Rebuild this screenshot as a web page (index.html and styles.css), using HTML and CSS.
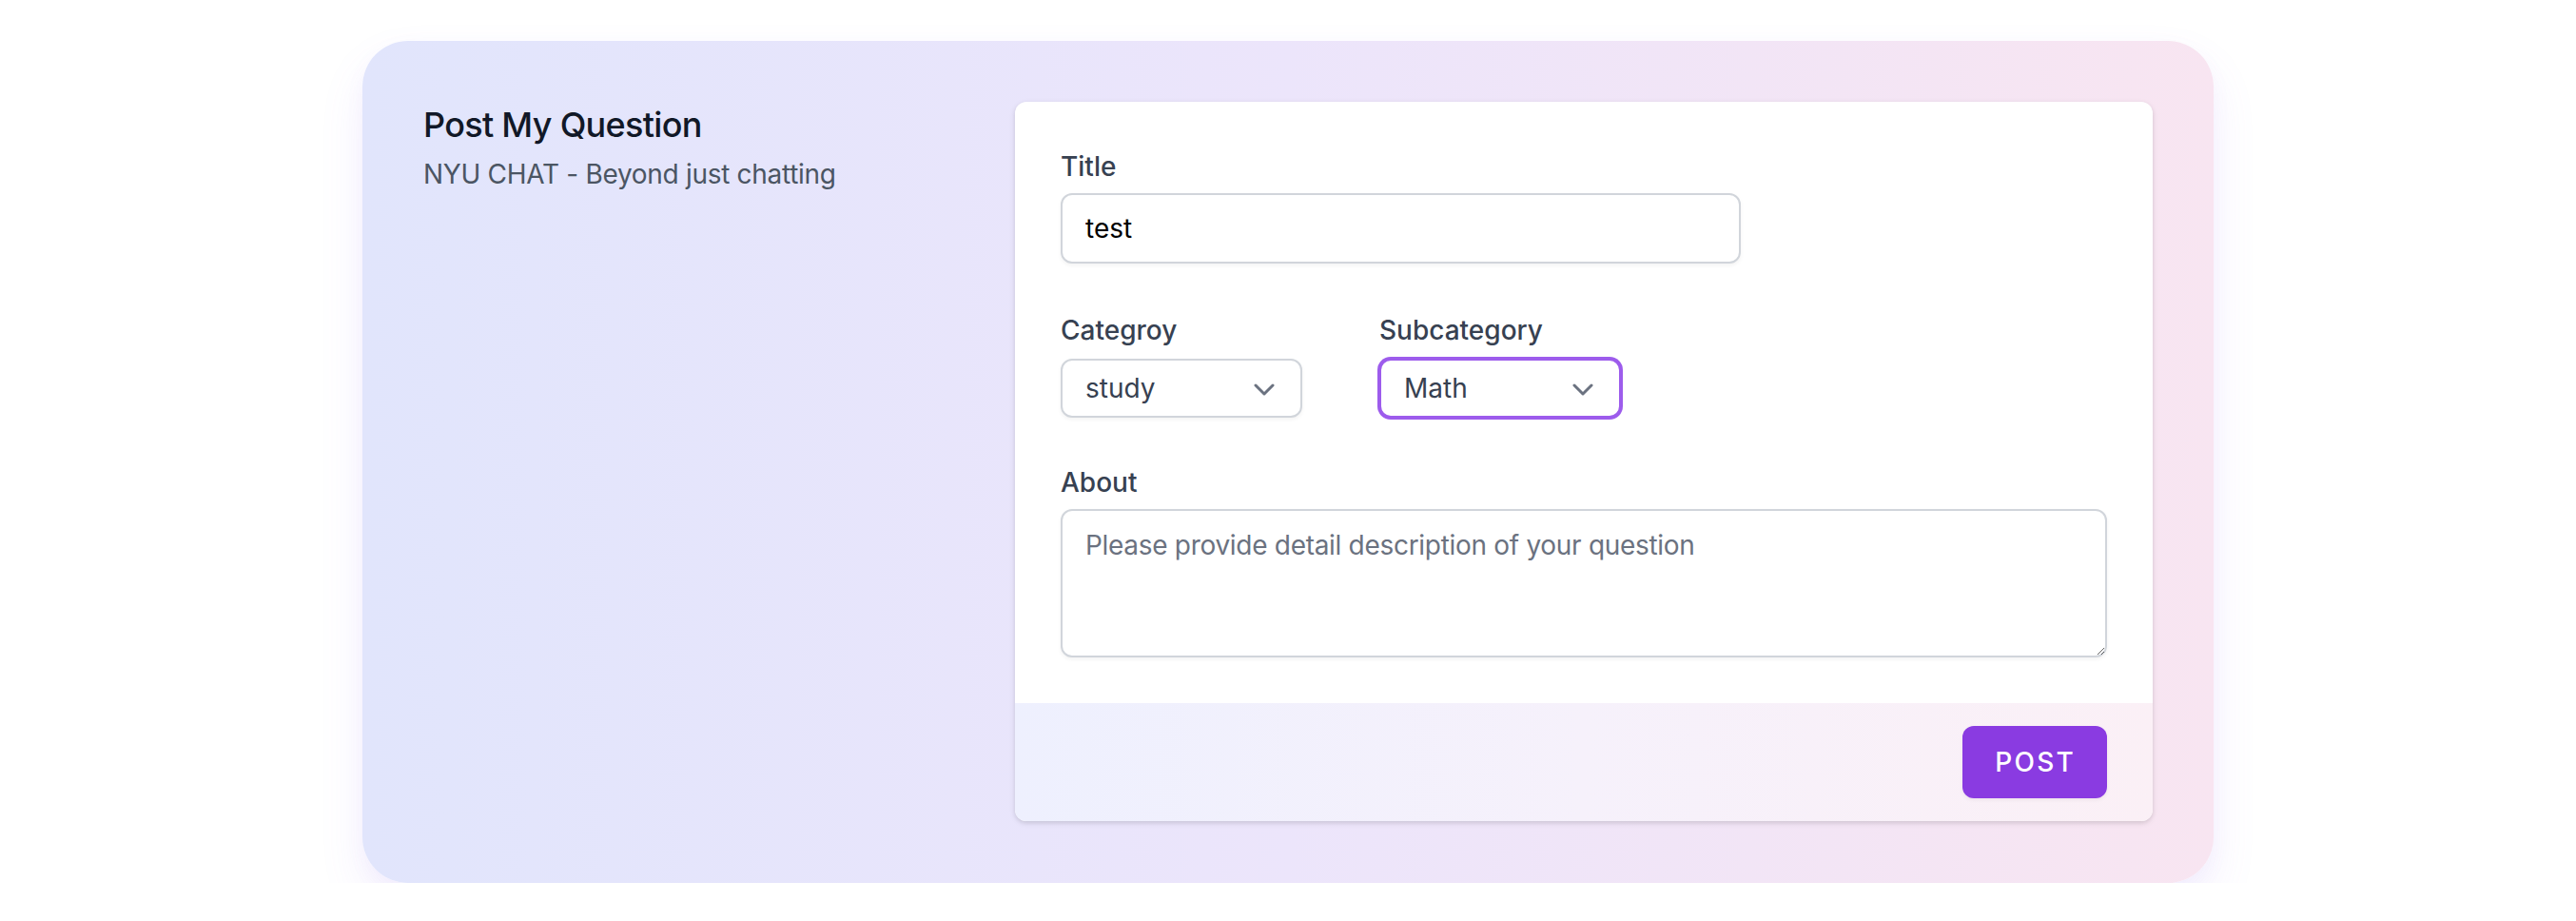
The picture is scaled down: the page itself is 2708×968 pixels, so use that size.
FILE: index.html
```html
<!DOCTYPE html>
<html lang="en">
<head>
<meta charset="utf-8">
<title>Post My Question</title>
<link rel="stylesheet" href="styles.css">
</head>
<body>
<div class="panel">
  <div class="intro">
    <h3 class="intro-title">Post My Question</h3>
    <p class="intro-sub">NYU CHAT - Beyond just chatting</p>
  </div>
  <form class="card">
    <div class="card-body">
      <div class="field">
        <label class="label">Title</label>
        <input class="text-input" type="text" value="test">
      </div>
      <div class="select-row">
        <div class="field">
          <label class="label label-select">Categroy</label>
          <div class="select">
            <span class="select-value">study</span>
            <svg class="chevron" width="22" height="13" viewBox="0 0 22 13"><polyline points="2,2 11,11 20,2" fill="none" stroke="#6b7280" stroke-width="3" stroke-linecap="round" stroke-linejoin="round"/></svg>
          </div>
        </div>
        <div class="field">
          <label class="label label-select">Subcategory</label>
          <div class="select select-focus">
            <span class="select-value">Math</span>
            <svg class="chevron" width="22" height="13" viewBox="0 0 22 13"><polyline points="2,2 11,11 20,2" fill="none" stroke="#6b7280" stroke-width="3" stroke-linecap="round" stroke-linejoin="round"/></svg>
          </div>
        </div>
      </div>
      <div class="field">
        <label class="label">About</label>
        <textarea class="textarea" rows="3" placeholder="Please provide detail description of your question"></textarea>
      </div>
    </div>
    <div class="card-footer">
      <button class="post-btn" type="button">POST</button>
    </div>
  </form>
</div>
</body>
</html>
```
FILE: styles.css
```css
* { box-sizing: border-box; }
html, body { margin: 0; padding: 0; background: #ffffff; }
body { font-family: Inter, "Noto Sans", "Liberation Sans", sans-serif; }

.panel {
  width: 1946px;
  margin: 43px auto 0;
  padding: 64px 64px 65px;
  border-radius: 48px;
  background: linear-gradient(90deg, #e1e5fc 0%, #ece5fb 50%, #f8e5f1 100%);
  box-shadow: 0 24px 48px rgba(150, 110, 245, 0.10), 0 8px 20px rgba(150, 110, 245, 0.05);
  display: grid;
  grid-template-columns: 574px 1196px;
  column-gap: 48px;
  align-items: start;
}

.intro-title {
  margin: 0;
  font-size: 36px;
  line-height: 48px;
  font-weight: 500;
  letter-spacing: -0.7px;
  color: #111827;
}
.intro-sub {
  margin: 8px 0 0;
  font-size: 28px;
  line-height: 40px;
  letter-spacing: -0.3px;
  color: #4b5563;
}

.card {
  margin: 0;
  background: #ffffff;
  border-radius: 12px;
  overflow: hidden;
  box-shadow: 0 2px 6px rgba(0, 0, 0, 0.10), 0 2px 4px rgba(0, 0, 0, 0.06);
}
.card-body {
  padding: 48px;
  display: flex;
  flex-direction: column;
  gap: 48px;
}
.field { display: flex; flex-direction: column; align-items: flex-start; }
.label {
  display: block;
  font-size: 28px;
  line-height: 40px;
  font-weight: 500;
  color: #374151;
  margin-bottom: 8px;
}
.label-select { margin-bottom: 10px; }
.text-input {
  width: 715px;
  height: 74px;
  padding: 16px 24px;
  border: 2px solid #d1d5db;
  border-radius: 12px;
  font-family: inherit;
  font-size: 28px;
  line-height: 40px;
  color: #000000;
  background: #ffffff;
  box-shadow: 0 2px 4px rgba(0, 0, 0, 0.05);
  outline: none;
}

.select-row {
  margin-top: 2px;
  display: grid;
  grid-template-columns: 287px 287px;
  column-gap: 48px;
}
.select {
  width: 254px;
  height: 62px;
  padding: 0 27px 0 24px;
  border: 2px solid #d1d5db;
  border-radius: 12px;
  background: #ffffff;
  box-shadow: 0 2px 4px rgba(0, 0, 0, 0.05);
  display: flex;
  align-items: center;
  justify-content: space-between;
}
.select-focus {
  border-color: #9d5cec;
  box-shadow: 0 0 0 2px #9d5cec;
}
.select-value {
  font-size: 28px;
  line-height: 40px;
  color: #374151;
}
.chevron { display: block; margin-top: 2px; }

.textarea {
  display: block;
  width: 100%;
  height: 156px;
  padding: 16px 24px;
  border: 2px solid #d1d5db;
  border-radius: 12px;
  font-family: inherit;
  font-size: 28px;
  line-height: 40px;
  letter-spacing: -0.3px;
  color: #111827;
  background: #ffffff;
  box-shadow: 0 2px 4px rgba(0, 0, 0, 0.05);
  resize: vertical;
  outline: none;
}
.textarea::placeholder { color: #6b7280; opacity: 1; }

.card-footer {
  padding: 24px 48px;
  text-align: right;
  background: linear-gradient(90deg, #eef0fe 0%, #f6f1fb 50%, #fbf0f6 100%);
}
.post-btn {
  display: inline-block;
  height: 76px;
  padding: 16px 31px 16px 32px;
  border: 2px solid transparent;
  border-radius: 12px;
  background: #8a3be1;
  color: #ffffff;
  font-family: inherit;
  font-size: 28px;
  line-height: 40px;
  font-weight: 500;
  letter-spacing: 0.08em;
  box-shadow: 0 2px 4px rgba(0, 0, 0, 0.05);
  cursor: pointer;
}
```
